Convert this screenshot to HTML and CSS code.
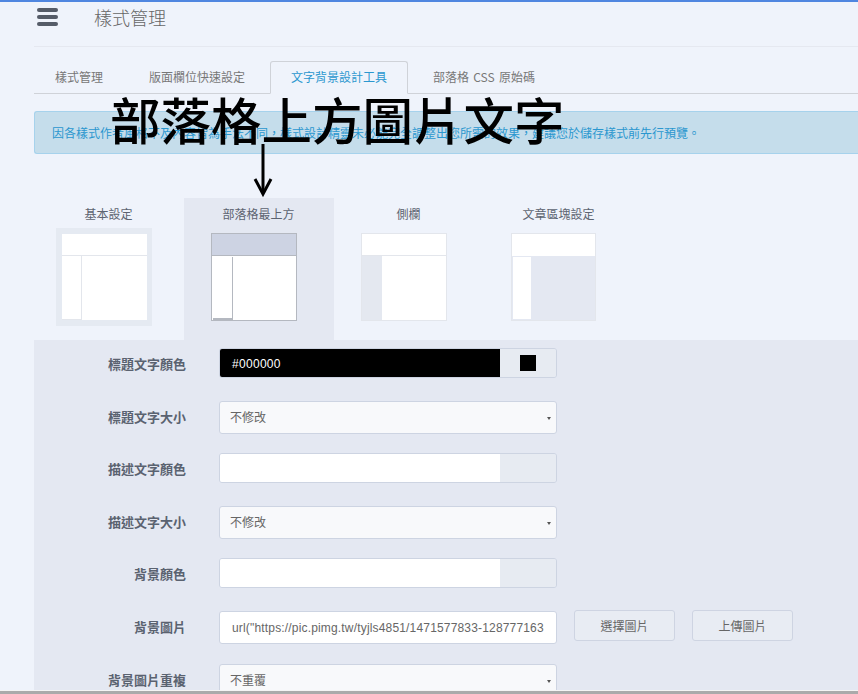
FILE: index.html
```html
<!DOCTYPE html>
<html lang="zh-Hant">
<head>
<meta charset="utf-8">
<title>樣式管理</title>
<link rel="stylesheet" href="styles.css">
</head>
<body>
<div class="top-strip"></div>
<main class="page">
  <header class="header">
    <div class="burger"><i></i><i></i><i></i></div>
    <h1 class="title">樣式管理</h1>
  </header>
  <nav class="tabs">
    <a class="tab">樣式管理</a>
    <a class="tab">版面欄位快速設定</a>
    <a class="tab active">文字背景設計工具</a>
    <a class="tab">部落格 CSS 原始碼</a>
  </nav>
  <div class="alert">因各樣式作者風格不及內容皆為手法不同，樣式設計精靈未必能完全調整出您所需的效果，建議您於儲存樣式前先行預覽。</div>
  <section class="picker">
    <div class="pick">
      <div class="pick-title">基本設定</div>
      <div class="thumb-frame">
        <div class="thumb plain"><div class="t-head"></div><div class="t-body"><div class="t-side"></div><div class="t-main"></div></div></div>
      </div>
    </div>
    <div class="pick selected">
      <div class="pick-title">部落格最上方</div>
      <div class="thumb hl-head"><div class="t-head"></div><div class="t-body"><div class="t-side"></div><div class="t-main"></div></div></div>
    </div>
    <div class="pick">
      <div class="pick-title">側欄</div>
      <div class="thumb hl-side"><div class="t-head"></div><div class="t-body"><div class="t-side"></div><div class="t-main"></div></div></div>
    </div>
    <div class="pick">
      <div class="pick-title">文章區塊設定</div>
      <div class="thumb hl-main"><div class="t-head"></div><div class="t-body"><div class="t-side"></div><div class="t-main"></div></div></div>
    </div>
  </section>
  <section class="form">
    <div class="row">
      <label class="lbl">標題文字顏色</label>
      <div class="color"><div class="color-val black">#000000</div><div class="color-btn"><span class="swatch"></span></div></div>
    </div>
    <div class="row">
      <label class="lbl">標題文字大小</label>
      <div class="select">不修改</div>
    </div>
    <div class="row">
      <label class="lbl">描述文字顏色</label>
      <div class="color"><div class="color-val"></div><div class="color-btn"></div></div>
    </div>
    <div class="row">
      <label class="lbl">描述文字大小</label>
      <div class="select">不修改</div>
    </div>
    <div class="row">
      <label class="lbl">背景顏色</label>
      <div class="color"><div class="color-val"></div><div class="color-btn"></div></div>
    </div>
    <div class="row">
      <label class="lbl">背景圖片</label>
      <div class="text-input"><span class="url">url("https://pic.pimg.tw/tyjls4851/1471577833-128777163</span></div>
      <button class="btn">選擇圖片</button>
      <button class="btn">上傳圖片</button>
    </div>
    <div class="row">
      <label class="lbl">背景圖片重複</label>
      <div class="select">不重覆</div>
    </div>
  </section>
</main>
<div class="bottom-strip"></div>
<div class="big-text">部落格上方圖片文字</div>
<svg class="arrow" width="20" height="54" viewBox="0 0 20 54" fill="none" stroke="#000" stroke-width="3"><path d="M10 0V49"/><path d="M2 35L10 50L18 35"/></svg>
</body>
</html>
```
FILE: styles.css
```css
* { box-sizing: border-box; }
html, body { height: 100%; }
body {
  margin: 0;
  height: 694px;
  overflow: hidden;
  display: flex;
  flex-direction: column;
  position: relative;
  background: #eff3fb;
  font-family: "Noto Sans CJK TC", "Liberation Sans", sans-serif;
  font-size: 12px;
  color: #666;
}
.top-strip { height: 2px; flex: none; background: #4f86e0; }
.bottom-strip { height: 4px; flex: none; background: #aaa; border-top: 1px solid #f4f4f4; }
.page { flex: 1; min-height: 0; overflow: hidden; padding-left: 34px; }

.header {
  height: 45px;
  display: flex;
  align-items: flex-start;
  border-bottom: 1px solid #e5e8f0;
}
.burger { width: 21px; margin: 6px 0 0 3px; display: flex; flex-direction: column; gap: 3px; }
.burger i { display: block; height: 4px; border-radius: 2px; background: #555c68; }
.title { margin: 2px 0 0 36px; font-size: 18px; line-height: 26px; font-weight: 300; color: #666; }

.tabs {
  margin-top: 14px;
  height: 33px;
  display: flex;
  gap: 4px;
  border-bottom: 1px solid #cfd2d8;
}
.tab {
  padding: 0 21px;
  height: 33px;
  line-height: 31px;
  white-space: nowrap;
  word-spacing: 1.5px;
  color: #777;
}
.tab.active {
  color: #2b97cf;
  background: #eff3fb;
  border: 1px solid #cfd2d8;
  border-bottom-color: #eff3fb;
  border-radius: 3px 3px 0 0;
  padding: 0 20px;
  line-height: 30px;
}

.alert {
  margin-top: 17px;
  height: 43px;
  padding-left: 17px;
  line-height: 41px;
  white-space: nowrap;
  background: #c5ddeb;
  border: 1px solid #a6d2ec;
  border-right: 0;
  border-radius: 3px 0 0 3px;
  color: #2b97cf;
}

.picker { margin-top: 44px; height: 142px; display: flex; }
.pick { width: 150px; padding-top: 7px; }
.pick.selected { background: #e4e8f2; }
.pick-title { width: 150px; padding-right: 1px; text-align: center; line-height: 18px; color: #5c6370; }
.thumb-frame { margin: 5px 0 0 22px; width: 96px; height: 98px; padding: 6px 5px 6px 6px; background: #e5eaf2; }
.thumb {
  margin: 10px 0 0 27px;
  width: 86px;
  height: 88px;
  display: flex;
  flex-direction: column;
  background: #fff;
  border: 1px solid #e3e6ec;
}
.thumb-frame .thumb { margin: 0; width: 85px; height: 86px; border: 0; }
.t-head { height: 22px; flex: none; border-bottom: 1px solid #e3e6ec; }
.t-body { flex: 1; display: flex; }
.t-side { width: 20px; border-right: 1px solid #e3e6ec; }
.t-main { flex: 1; }
.plain .t-side { width: 20px; border-bottom: 1px solid #e3e6ec; }
.hl-head { border-color: #b4b8c0; }
.hl-head .t-head { background: #cdd3e3; border-bottom-color: #b4b8c0; }
.hl-head .t-side { margin-left: 1px; margin-top: 1px; border: 1px solid #b4b8c0; border-width: 0 1px 2px 0; width: 20px; }
.hl-side .t-side { background: #e4e8f0; border-right: 0; }
.hl-main { width: 85px; }
.hl-main .t-side { margin: 1px 0 1px 1px; width: 18px; background: #fff; border: 0; }
.hl-main .t-main { background: #e4e8f2; }
.hl-main .t-head { border-bottom: 0; }
.hl-main .t-body { background: #e4e8f2; }

.form {
  height: 400px;
  padding-top: 8px;
  background: #e4e8f2;
  display: grid;
  grid-auto-rows: 52.6px;
}
.row { display: flex; align-items: flex-start; }
.lbl {
  width: 152px;
  flex: none;
  margin-right: 33px;
  text-align: right;
  font-size: 13px;
  font-weight: 700;
  line-height: 32px;
  color: #5a6270;
}
.color, .select, .text-input { width: 338px; flex: none; border: 1px solid #cdd4e2; border-radius: 3px; }
.color { height: 30px; display: flex; overflow: hidden; }
.color-val { width: 280px; flex: none; background: #fff; padding-left: 12px; line-height: 30px; }
.color-val.black { background: #000; color: #fff; font-family: "Liberation Sans", sans-serif; letter-spacing: 0.3px; }
.color-btn { flex: 1; background: #e7ebf2; display: flex; align-items: center; justify-content: center; }
.swatch { width: 16px; height: 16px; background: #000; }
.select {
  height: 33px;
  position: relative;
  background: #f8f9fb;
  padding-left: 10px;
  line-height: 30px;
}
.select::after {
  content: "";
  position: absolute;
  right: 5px;
  top: 15px;
  border: 2px solid transparent;
  border-top: 3px solid #555;
  border-bottom: 0;
}
.text-input { height: 33px; background: #fff; padding-left: 12px; line-height: 30px; overflow: hidden; white-space: nowrap; }
.url { font-family: "Liberation Sans", sans-serif; letter-spacing: 0.17px; }
.btn {
  width: 101px;
  height: 31px;
  margin: -1px 0 0 17px;
  padding: 0;
  background: #e8ecf3;
  border: 1px solid #ced4e2;
  border-radius: 3px;
  font: inherit;
  color: #666;
}
.btn + .btn { margin-left: 17px; }

.big-text {
  position: absolute;
  left: 110px;
  top: 82px;
  font-size: 50.5px;
  line-height: 72px;
  font-weight: 500;
  color: #000;
  white-space: nowrap;
}
.arrow { position: absolute; left: 253px; top: 144px; }
```
